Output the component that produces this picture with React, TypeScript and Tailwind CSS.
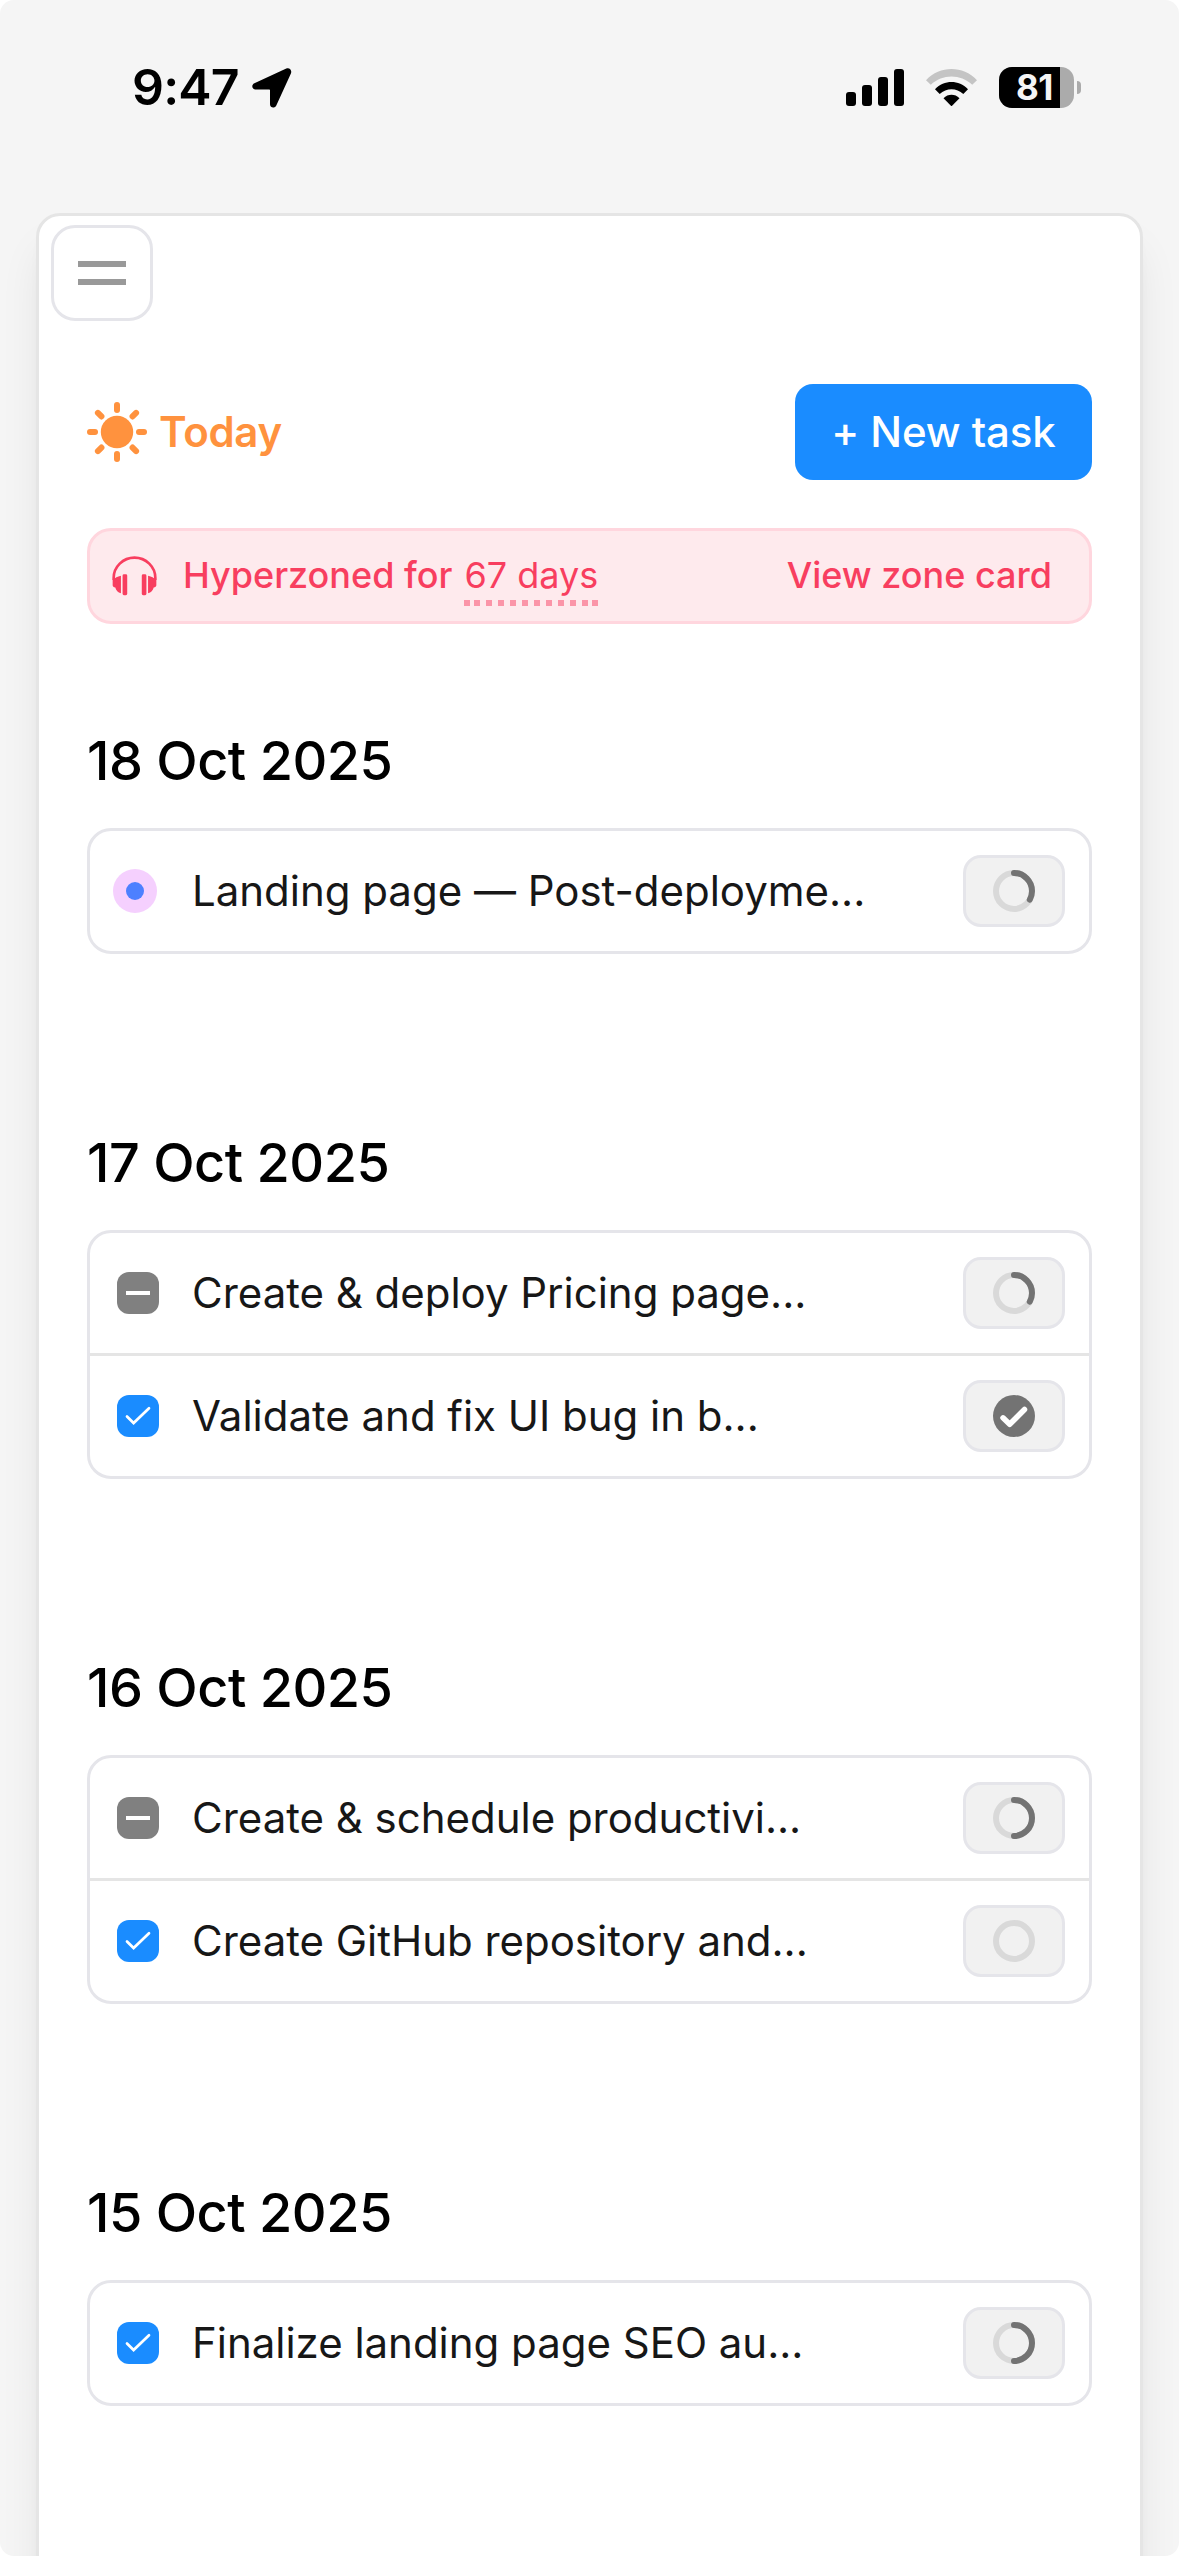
type CheckState = 'active' | 'partial' | 'done';

type Task = {
    id: number;
    title: string;
    state: CheckState;
    progress: number;
};

type Day = {
    date: string;
    tasks: Task[];
};

const days: Day[] = [
    {
        date: '18 Oct 2025',
        tasks: [
            { id: 1, title: 'Landing page — Post-deployme...', state: 'active', progress: 0.33 },
        ],
    },
    {
        date: '17 Oct 2025',
        tasks: [
            { id: 2, title: 'Create & deploy Pricing page...', state: 'partial', progress: 0.33 },
            { id: 3, title: 'Validate and fix UI bug in b...', state: 'done', progress: 1 },
        ],
    },
    {
        date: '16 Oct 2025',
        tasks: [
            { id: 4, title: 'Create & schedule productivi...', state: 'partial', progress: 0.5 },
            { id: 5, title: 'Create GitHub repository and...', state: 'done', progress: 0 },
        ],
    },
    {
        date: '15 Oct 2025',
        tasks: [
            { id: 6, title: 'Finalize landing page SEO au...', state: 'done', progress: 0.5 },
        ],
    },
];

// Left edge of every dot in the underline below the day count
const underlineDots = [0, 10, 22, 34, 46, 58, 70, 82, 94, 106, 118, 128];

function StatusBar() {
    return (
        <div className="flex h-[213px] shrink-0 items-start justify-between pl-[132px] pr-[98px] pt-[66px] text-black">
            <div className="flex h-[43px] items-center">
                <span className="w-[120px] text-[50px] leading-[43px] font-semibold tracking-[-0.8px]">
                    9:47
                </span>
                <svg viewBox="0 0 40 40" className="h-10 w-10">
                    <path
                        d="M34.3 .6 2.4 15.2C-1.1 16.9 0 21.5 3.6 21.6H17.3c.5 0 .7.2.7.7V36.2c.1 3.7 4.7 4.4 6.3 1.2L38.9 5.5C40.3 2.3 37.5-.7 34.3.6Z"
                        fill="currentColor"
                    />
                </svg>
            </div>

            <div className="flex h-[43px] items-center">
                <svg viewBox="0 0 58 37" className="mr-[22px] h-[37px] w-[58px]" fill="currentColor">
                    <rect x="0" y="23" width="10" height="14" rx="3" />
                    <rect x="16" y="16" width="10" height="21" rx="3" />
                    <rect x="32" y="8" width="10" height="29" rx="3" />
                    <rect x="48" y="0" width="10" height="37" rx="3" />
                </svg>
                <svg viewBox="0 0 51 37" className="mr-[22px] h-[37px] w-[51px]">
                    <path
                        d="M0 11.2C14-3.7 37-3.7 51 11.2L46.2 15.7C34.5 4.7 16.5 4.7 4.8 15.7Z"
                        fill="#c4c4c4"
                    />
                    <path
                        d="M9 20.3C18.2 10.6 32.8 10.6 42 20.3L37.3 25C30.6 18.5 20.4 18.5 13.7 25Z"
                        fill="currentColor"
                    />
                    <path
                        d="M17.5 29.3C22 24.7 29 24.7 33.5 29.3L25.5 37.3Z"
                        fill="currentColor"
                    />
                </svg>
                <div className="flex items-center gap-[3px]">
                    <div className="flex h-[41px] w-[75px] items-center overflow-hidden rounded-[13px] bg-[#ababab]">
                        <div className="flex h-full w-[61px] items-center bg-black pl-[17px] text-[35px] leading-none font-bold tracking-[-0.5px] text-[#f5f5f5]">
                            81
                        </div>
                    </div>
                    <div className="h-[13px] w-1 rounded-r-full bg-[#ababab]" />
                </div>
            </div>
        </div>
    );
}

function SunIcon() {
    const angles = [0, 45, 90, 135, 180, 225, 270, 315];
    return (
        <svg viewBox="0 0 60 60" className="h-[60px] w-[60px]">
            <circle cx="30" cy="30" r="16.2" fill="currentColor" />
            {angles.map((a) => (
                <path
                    key={a}
                    d="M30 3v5"
                    stroke="currentColor"
                    strokeWidth="6"
                    strokeLinecap="round"
                    transform={`rotate(${a} 30 30)`}
                />
            ))}
        </svg>
    );
}

function HeadphonesIcon() {
    const cup = 'M27 59V112C18 111 12 104 10 95C5 94 2 92 2 88V71C10 66 16 61 27 59Z';
    return (
        <svg viewBox="0 0 136 120" className="h-10 w-[45px]">
            <path
                d="M5 72V66A63 61.5 0 0 1 131 66V72"
                fill="none"
                stroke="currentColor"
                strokeWidth="8"
            />
            <g fill="currentColor">
                <path d={cup} />
                <path d={cup} transform="translate(136 0) scale(-1 1)" />
                <rect x="32" y="55" width="14" height="63" rx="4" />
                <rect x="90" y="55" width="14" height="63" rx="4" />
            </g>
        </svg>
    );
}

function TaskMarker({ state }: { state: CheckState }) {
    if (state === 'active') {
        return (
            <span className="-ml-1 mr-[2px] flex h-11 w-11 items-center justify-center rounded-full bg-[#f5d0fe]">
                <span className="h-[18px] w-[18px] rounded-full bg-[#4d80ff]" />
            </span>
        );
    }
    if (state === 'partial') {
        return (
            <span className="flex h-[42px] w-[42px] items-center justify-center rounded-xl bg-[#808080]">
                <span className="h-1 w-6 bg-white" />
            </span>
        );
    }
    return (
        <span className="flex h-[42px] w-[42px] items-center justify-center rounded-xl bg-[#1a8cff]">
            <svg viewBox="0 0 42 42" className="h-full w-full">
                <path
                    d="M10 21.5 16.6 28 32 13.2"
                    fill="none"
                    stroke="white"
                    strokeWidth="2.7"
                    strokeLinecap="round"
                />
            </svg>
        </span>
    );
}

function ProgressRing({ progress }: { progress: number }) {
    if (progress >= 1) {
        return (
            <svg viewBox="0 0 42 42" className="h-[42px] w-[42px]">
                <circle cx="21" cy="21" r="21" fill="#737373" />
                <path
                    d="M10 22.8 16.7 29.3 31.5 14.5"
                    fill="none"
                    stroke="white"
                    strokeWidth="5.5"
                    strokeLinecap="round"
                    strokeLinejoin="round"
                />
            </svg>
        );
    }
    return (
        <svg viewBox="0 0 42 42" className="h-[42px] w-[42px] -rotate-90" fill="none" strokeWidth="6">
            <circle cx="21" cy="21" r="18" stroke="#d9d9d9" />
            {progress > 0 && (
                <circle
                    cx="21"
                    cy="21"
                    r="18"
                    stroke="#737373"
                    strokeLinecap="round"
                    pathLength={100}
                    strokeDasharray={`${progress * 100} 100`}
                />
            )}
        </svg>
    );
}

function TaskRow({ task }: { task: Task }) {
    return (
        <li className="box-content flex h-[120px] items-center pl-[27px] pr-6">
            <TaskMarker state={task.state} />
            <span className="ml-[33px] flex-1 pb-[2px] text-[42px] tracking-[-0.02px] whitespace-nowrap text-[#171717]">
                {task.title}
            </span>
            <button className="flex h-[72px] w-[102px] items-center justify-center rounded-[18px] border-[3px] border-[#e5e5ea] bg-[#f1f1f1]">
                <ProgressRing progress={task.progress} />
            </button>
        </li>
    );
}

export default function App() {
    return (
        <div className="bg-white">
            <div className="flex h-[2556px] w-[1179px] flex-col overflow-hidden rounded-[14px] bg-[#f5f5f5] font-['Inter',sans-serif] [font-optical-sizing:none]">
                <StatusBar />

                <main className="mx-9 -mb-16 flex-1 rounded-t-3xl border-[3px] border-[#e5e5e5] bg-white shadow-[0_30px_45px_-9px_rgba(0,0,0,0.1),0_12px_18px_-12px_rgba(0,0,0,0.1)]">
                    <button className="mt-[9px] ml-3 flex h-24 w-[102px] flex-col items-center justify-center gap-3 rounded-3xl border-[3px] border-[#e5e5ea]">
                        <span className="h-[6px] w-12 bg-[#999999]" />
                        <span className="h-[6px] w-12 bg-[#999999]" />
                    </button>

                    <div className="px-12 pt-[63px]">
                        <div className="flex h-24 items-center justify-between">
                            <h1 className="flex items-center gap-3 text-[42px] font-semibold tracking-[-0.3px] text-[#ff923e]">
                                <SunIcon />
                                <span className="pb-[2px]">Today</span>
                            </h1>
                            <button className="h-24 w-[297px] rounded-[18px] bg-[#1a8cff] pb-[2px] text-[42px] font-medium tracking-[-0.1px] text-white">
                                + New task
                            </button>
                        </div>

                        <div className="mt-12 flex h-24 items-center rounded-3xl border-[3px] border-[#ffd6de] bg-[#feeaed] pr-[37px] pl-[22px] text-[36px] font-medium text-[#f83e5f]">
                            <HeadphonesIcon />
                            <span className="ml-[26px] pb-[2px]">Hyperzoned for</span>
                            <span className="relative ml-3 pb-[2px] font-normal">
                                67 days
                                <svg
                                    viewBox="0 0 134 6"
                                    className="absolute bottom-[-2px] left-0 h-[6px] w-[134px]"
                                    fill="#fb95a8"
                                >
                                    {underlineDots.map((x) => (
                                        <rect key={x} x={x} y="0" width="6" height="6" />
                                    ))}
                                </svg>
                            </span>
                            <button className="ml-auto pb-[2px]">View zone card</button>
                        </div>

                        <div className="mt-[107px] space-y-[179px]">
                            {days.map((day) => (
                                <section key={day.date}>
                                    <h2 className="text-[54px] leading-[60px] font-medium tracking-[-0.5px] text-black">
                                        {day.date}
                                    </h2>
                                    <ul className="mt-[37px] divide-y-[3px] divide-[#e5e5e5] rounded-3xl border-[3px] border-[#e5e5ea]">
                                        {day.tasks.map((task) => (
                                            <TaskRow key={task.id} task={task} />
                                        ))}
                                    </ul>
                                </section>
                            ))}
                        </div>
                    </div>
                </main>
            </div>
        </div>
    );
}
